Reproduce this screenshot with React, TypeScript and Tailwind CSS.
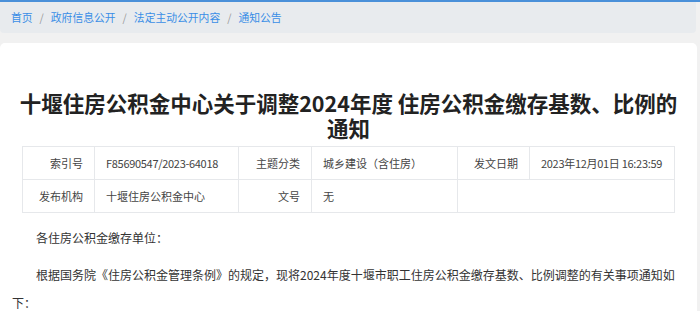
const crumbs = ['首页', '政府信息公开', '法定主动公开内容', '通知公告']

const App = () => {
  return (
    <div
      className="min-h-screen border-t-2 border-[#4a90d9] bg-[#f1f1f1]"
      style={{ fontFamily: '"Noto Sans CJK SC", "Noto Sans", sans-serif' }}
    >
      {/* Breadcrumb */}
      <div className="mr-[4px] flex h-[31px] items-center rounded-b-[4px] bg-[#e8ebee] px-[11px] text-[10.8px]">
        {crumbs.map((c, idx) => (
          <span key={idx} className="flex items-center">
            {idx > 0 && <span className="px-[7px] text-[#9a9a9a]">/</span>}
            <span className="text-[#3a8ee6]">{c}</span>
          </span>
        ))}
      </div>

      {/* Article */}
      <div className="mr-[3px] mt-[10px] rounded-t-[5px] bg-white px-[12px] pb-4 pt-[47px]">
        <h1 className="text-center text-[21.5px] font-bold leading-[25px] text-[#222]">
          十堰住房公积金中心关于调整2024年度 住房公积金缴存基数、比例的通知
        </h1>

        <table className="mx-auto mt-[6px] w-[652px] table-fixed border-collapse text-[11px] text-[#444]">
          <colgroup>
            <col className="w-[72px]" />
            <col className="w-[144px]" />
            <col className="w-[73px]" />
            <col className="w-[146px]" />
            <col className="w-[72px]" />
            <col className="w-[145px]" />
          </colgroup>
          <tbody>
            <tr className="h-[33px]">
              <td className="border border-[#e6e8eb] pr-[11px] text-right">索引号</td>
              <td className="border border-[#e6e8eb] pl-[11px] tracking-[-0.3px]">F85690547/2023-64018</td>
              <td className="border border-[#e6e8eb] pr-[11px] text-right">主题分类</td>
              <td className="border border-[#e6e8eb] pl-[11px]">城乡建设（含住房）</td>
              <td className="border border-[#e6e8eb] pr-[11px] text-right">发文日期</td>
              <td className="border border-[#e6e8eb] pl-[11px] tracking-[-0.3px]">2023年12月01日 16:23:59</td>
            </tr>
            <tr className="h-[33px]">
              <td className="border border-[#e6e8eb] pr-[11px] text-right">发布机构</td>
              <td className="border border-[#e6e8eb] pl-[11px]">十堰住房公积金中心</td>
              <td className="border border-[#e6e8eb] pr-[11px] text-right">文号</td>
              <td className="border border-[#e6e8eb] pl-[11px]">无</td>
              <td colSpan={2} className="border border-[#e6e8eb]" />
            </tr>
          </tbody>
        </table>

        <div className="mt-[11px] space-y-[9px] text-[12px] leading-[28px] text-[#333]">
          <p className="indent-[2em]">各住房公积金缴存单位：</p>
          <p className="indent-[2em]">
            根据国务院《住房公积金管理条例》的规定，现将2024年度十堰市职工住房公积金缴存基数、比例调整的有关事项通知如下：
          </p>
        </div>
      </div>
    </div>
  )
}

export default App
